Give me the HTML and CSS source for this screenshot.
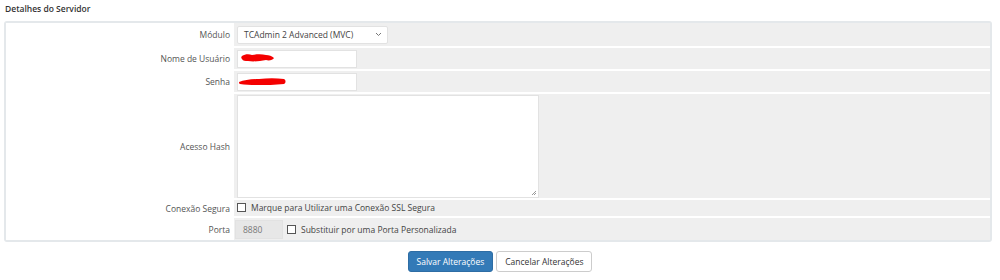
FILE: index.html
```html
<!DOCTYPE html>
<html lang="pt-BR">
<head>
    <meta charset="UTF-8">
    <title>Detalhes do Servidor</title>
    <link rel="stylesheet" href="styles.css">
</head>
<body>
    <h3 class="section-title">Detalhes do Servidor</h3>

    <div class="field-box">
        <table class="form-table">
            <tr class="row-select">
                <td class="field-label">Módulo</td>
                <td class="field-area">
                    <div class="fake-select">
                        <span>TCAdmin 2 Advanced (MVC)</span>
                        <svg width="7" height="5" viewBox="0 0 7 5"><path d="M1 1l2.5 2.5L6 1" fill="none" stroke="#777" stroke-width="1"/></svg>
                    </div>
                </td>
            </tr>
            <tr class="row-input">
                <td class="field-label">Nome de Usuário</td>
                <td class="field-area">
                    <div class="text-input">
                        <svg class="redact" width="40" height="12" viewBox="0 0 40 12"><path d="M2 3c3-2 7-2 10-1 5-1 10-1 14 0 3 0 6 1 8 3-1 2-5 3-8 2-6 1-12 2-18 1-3 0-5 0-6-2-1-1-1-2 0-3z" fill="#f40000"/></svg>
                    </div>
                </td>
            </tr>
            <tr class="row-input">
                <td class="field-label">Senha</td>
                <td class="field-area">
                    <div class="text-input">
                        <svg class="redact2" width="50" height="8" viewBox="0 0 50 8"><path d="M1 4c5-2 12-3 20-3 9-1 17-1 25 0 2 1 2 4 0 5-9 1-18 1-27 1-6 0-12 0-17-1-1 0-1-2-1-2z" fill="#f40000"/></svg>
                    </div>
                </td>
            </tr>
            <tr class="row-area">
                <td class="field-label">Acesso Hash</td>
                <td class="field-area">
                    <div class="text-area">
                        <svg class="grip" width="6" height="6" viewBox="0 0 6 6"><path d="M5 1L1 5M5 3L3 5" stroke="#999" stroke-width="1"/></svg>
                    </div>
                </td>
            </tr>
            <tr class="row-check">
                <td class="field-label">Conexão Segura</td>
                <td class="field-area">
                    <label class="check"><span class="box"></span>Marque para Utilizar uma Conexão SSL Segura</label>
                </td>
            </tr>
            <tr class="row-port">
                <td class="field-label">Porta</td>
                <td class="field-area">
                    <div class="port-row">
                        <div class="port-input">8880</div>
                        <label class="check"><span class="box"></span>Substituir por uma Porta Personalizada</label>
                    </div>
                </td>
            </tr>
        </table>
    </div>

    <div class="btn-row">
        <button class="btn btn-primary">Salvar Alterações</button>
        <button class="btn btn-default">Cancelar Alterações</button>
    </div>
</body>
</html>
```

FILE: styles.css
```css
* {
    box-sizing: border-box;
}

body {
    margin: 0;
    font-family: "Open Sans", Arial, sans-serif;
    font-size: 8.5px;
    color: #333;
    background-color: #fff;
}

.section-title {
    margin: 0;
    padding: 3px 5px 0;
    height: 21px;
    font-size: 8.5px;
    font-weight: 600;
    color: #333;
}

.field-box {
    margin: 0 8px 0 4px;
    border: 2px solid #e4e8eb;
    border-radius: 3px;
}

.form-table {
    width: 100%;
    border-collapse: separate;
    border-spacing: 0 2px;
    margin: -2px 0;
}

.form-table td {
    padding-top: 0;
    padding-bottom: 0;
    vertical-align: middle;
}

.row-select td { height: 23px; }
.row-input td { height: 21px; }
.row-area td { height: 104px; }
.row-check td { height: 16px; }
.row-port td { height: 22px; }

.field-label {
    width: 228px;
    text-align: right;
    padding-right: 4px;
    color: #555;
    background-color: #fff;
}

.field-area {
    background-color: #efefef;
    padding-left: 3px;
}

.fake-select {
    width: 151px;
    height: 18px;
    background-color: #fff;
    border: 1px solid #e2e2e2;
    border-radius: 2px;
    display: flex;
    align-items: center;
    justify-content: space-between;
    padding: 0 5px 0 6px;
    color: #444;
}

.text-input {
    width: 120px;
    height: 18px;
    background-color: #fff;
    border: 1px solid #e2e2e2;
    display: flex;
    align-items: center;
}

.redact {
    margin-left: 2px;
}

.text-area {
    width: 302px;
    height: 103px;
    background-color: #fff;
    border: 1px solid #e2e2e2;
    display: flex;
    align-items: flex-end;
    justify-content: flex-end;
    padding: 1px;
}

.check {
    display: inline-flex;
    align-items: center;
    gap: 5px;
    color: #444;
}

.box {
    width: 9px;
    height: 9px;
    border: 1px solid #555;
    background-color: #fff;
}

.port-row {
    display: flex;
    align-items: center;
    gap: 4px;
}

.port-input {
    width: 48px;
    height: 19px;
    background-color: #e7e7e7;
    border: 1px solid #e2e2e2;
    color: #777;
    padding: 3px 7px;
    margin-left: -2px;
}

.btn-row {
    display: flex;
    justify-content: center;
    gap: 3px;
    margin-top: 9px;
}

.btn {
    font-family: "Open Sans", Arial, sans-serif;
    font-size: 8.5px;
    height: 21px;
    padding: 0 8px;
    border-radius: 3px;
}

.btn-primary {
    background-color: #337ab7;
    border: 1px solid #2e6da4;
    color: #fff;
}

.btn-default {
    background-color: #fff;
    border: 1px solid #ccc;
    color: #333;
}
```
